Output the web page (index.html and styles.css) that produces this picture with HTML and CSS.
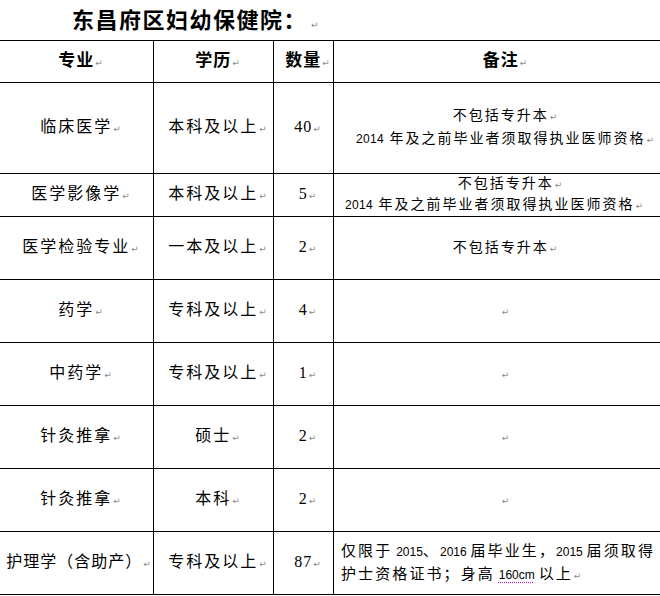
FILE: index.html
```html
<!DOCTYPE html>
<html lang="zh-CN">
<head>
<meta charset="utf-8">
<title>东昌府区妇幼保健院</title>
<link rel="stylesheet" href="styles.css">
</head>
<body>
<div class="page">
  <h1 class="title">东昌府区妇幼保健院：<span class="pm">↵</span></h1>
  <table class="grid">
    <colgroup>
      <col class="c1"><col class="c2"><col class="c3"><col class="c4">
    </colgroup>
    <tr class="head">
      <th>专业<span class="pm">↵</span></th>
      <th>学历<span class="pm">↵</span></th>
      <th>数量<span class="pm">↵</span></th>
      <th>备注<span class="pm">↵</span></th>
    </tr>
    <tr class="r-tall">
      <td>临床医学<span class="pm">↵</span></td>
      <td>本科及以上<span class="pm">↵</span></td>
      <td class="num">40<span class="pm">↵</span></td>
      <td class="note">
        <span class="ln">不包括专升本<span class="pm">↵</span></span>
        <span class="ln"><span class="d">2014</span> 年及之前毕业者须取得执业医师资格<span class="pm">↵</span></span>
      </td>
    </tr>
    <tr class="r-short">
      <td>医学影像学<span class="pm">↵</span></td>
      <td>本科及以上<span class="pm">↵</span></td>
      <td class="num">5<span class="pm">↵</span></td>
      <td class="note note-tight">
        <span class="ln ln-a">不包括专升本<span class="pm">↵</span></span>
        <span class="ln ln-b"><span class="d">2014</span> 年及之前毕业者须取得执业医师资格<span class="pm">↵</span></span>
      </td>
    </tr>
    <tr class="r">
      <td>医学检验专业<span class="pm">↵</span></td>
      <td>一本及以上<span class="pm">↵</span></td>
      <td class="num">2<span class="pm">↵</span></td>
      <td class="note"><span class="ln">不包括专升本<span class="pm">↵</span></span></td>
    </tr>
    <tr class="r">
      <td>药学<span class="pm">↵</span></td>
      <td>专科及以上<span class="pm">↵</span></td>
      <td class="num">4<span class="pm">↵</span></td>
      <td class="note"><span class="pm">↵</span></td>
    </tr>
    <tr class="r">
      <td>中药学<span class="pm">↵</span></td>
      <td>专科及以上<span class="pm">↵</span></td>
      <td class="num">1<span class="pm">↵</span></td>
      <td class="note"><span class="pm">↵</span></td>
    </tr>
    <tr class="r">
      <td>针灸推拿<span class="pm">↵</span></td>
      <td>硕士<span class="pm">↵</span></td>
      <td class="num">2<span class="pm">↵</span></td>
      <td class="note"><span class="pm">↵</span></td>
    </tr>
    <tr class="r">
      <td>针灸推拿<span class="pm">↵</span></td>
      <td>本科<span class="pm">↵</span></td>
      <td class="num">2<span class="pm">↵</span></td>
      <td class="note"><span class="pm">↵</span></td>
    </tr>
    <tr class="r">
      <td class="tight">护理学（含助产）<span class="pm">↵</span></td>
      <td>专科及以上<span class="pm">↵</span></td>
      <td class="num">87<span class="pm">↵</span></td>
      <td class="note note-left">
        <span class="ln">仅限于 <span class="d">2015</span>、<span class="d">2016</span> 届毕业生，<span class="d">2015</span> 届须取得</span>
        <span class="ln">护士资格证书；身高 <span class="d chk">160cm</span> 以上<span class="pm">↵</span></span>
      </td>
    </tr>
  </table>
</div>
</body>
</html>
```

FILE: styles.css
```css
html, body {
  margin: 0;
  padding: 0;
  background: #fff;
  overflow: hidden;
}

body {
  width: 660px;
  height: 596px;
  color: #000;
  font-family: "Liberation Serif", "Noto Sans CJK SC", serif;
}

.page {
  width: 660px;
  overflow: hidden;
}

.title {
  margin: 0;
  height: 40px;
  padding-left: 72px;
  font-size: 22px;
  line-height: 42px;
  font-weight: bold;
  letter-spacing: 1.5px;
}

.pm {
  color: #8c8c8c;
  font-family: "DejaVu Sans", sans-serif;
  font-size: 9px;
  font-weight: normal;
  letter-spacing: 0;
  margin-left: 1px;
}

.title .pm {
  margin-left: 4px;
}

.grid {
  border-collapse: collapse;
  table-layout: fixed;
  width: 669px;
  margin-left: -1px;
}

.c1 { width: 154px; }
.c2 { width: 120px; }
.c3 { width: 60px; }
.c4 { width: 335px; }

.grid th,
.grid td {
  border: 1px solid #000;
  padding: 0 0 0 8px;
  text-align: center;
  vertical-align: middle;
  white-space: nowrap;
  font-size: 16px;
  line-height: 21px;
  letter-spacing: 2px;
  font-weight: normal;
}

.grid th {
  font-size: 17px;
  font-weight: bold;
  letter-spacing: 1px;
}

.head { height: 42px; }
.r-tall { height: 91px; }
.r-short { height: 42px; }
.r { height: 63px; }

.grid td.num {
  letter-spacing: 1px;
}

.grid td.tight {
  padding-left: 4px;
  letter-spacing: 1px;
}

.grid td.note {
  font-size: 14px;
  line-height: 21px;
  letter-spacing: 2px;
}

.grid td.note-tight {
  line-height: 20px;
}

.ln {
  display: block;
}

.ln-a { padding-left: 10px; }
.ln-b { padding-right: 22px; }

.grid td.note-left {
  text-align: left;
  padding-left: 7px;
  font-size: 15px;
  line-height: 22px;
  letter-spacing: 2.1px;
  word-spacing: -2px;
}

.d {
  font-family: "Liberation Sans Narrow", "Liberation Sans", sans-serif;
  font-size: 12px;
  letter-spacing: 0.3px;
}

.note-left .d {
  letter-spacing: 0;
}

.chk {
  text-decoration: underline dotted #c020c0;
  text-underline-offset: 3px;
}
```
